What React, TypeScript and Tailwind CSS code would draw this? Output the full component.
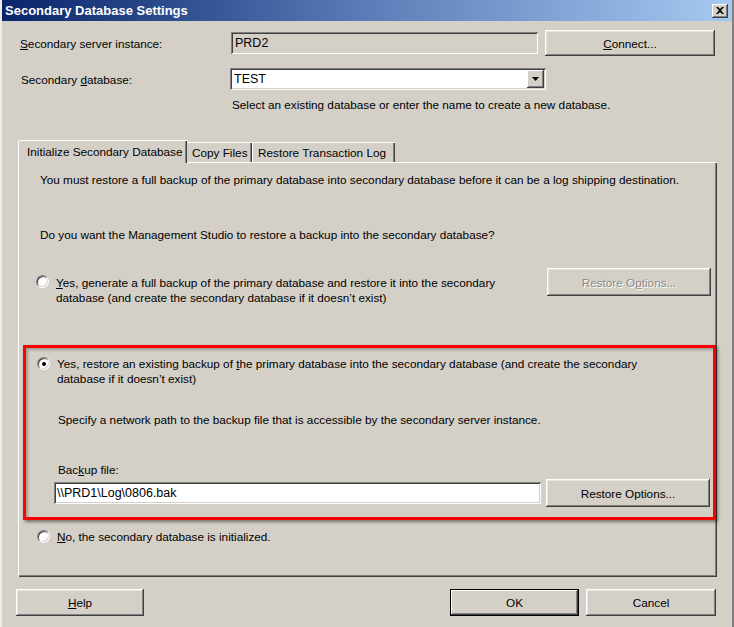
import React from 'react';

// classic 3D button
function Btn({ children, className = '', isDefault = false, disabled = false }: { children: React.ReactNode; className?: string; isDefault?: boolean; disabled?: boolean }) {
  return (
    <div
      className={`flex items-center justify-center bg-[#d4d0c8] ${
        isDefault
          ? 'border border-black shadow-[inset_-1px_-1px_0_#404040,inset_1px_1px_0_#ffffff,inset_-2px_-2px_0_#808080]'
          : 'shadow-[inset_-1px_-1px_0_#404040,inset_1px_1px_0_#ffffff,inset_-2px_-2px_0_#808080,inset_2px_2px_0_#e6e4df]'
      } ${disabled ? 'text-[#8d8b86] [text-shadow:1px_1px_0_#ffffff]' : 'text-black'} ${className}`}
    >
      {children}
    </div>
  );
}

function Radio({ checked = false }: { checked?: boolean }) {
  return (
    <div className="relative w-[13px] h-[13px] shrink-0 rounded-full bg-white border border-t-[#808080] border-l-[#808080] border-b-[#ffffff] border-r-[#ffffff] shadow-[inset_1px_1px_0_#404040,inset_-1px_-1px_0_#d4d0c8]">
      {checked && <div className="absolute left-[3.5px] top-[3.5px] w-[4px] h-[4px] rounded-full bg-black" />}
    </div>
  );
}

const sunken = 'shadow-[inset_1px_1px_0_#808080,inset_-1px_-1px_0_#ffffff,inset_2px_2px_0_#404040,inset_-2px_-2px_0_#d4d0c8]';

export default function App() {
  return (
    <div className="w-[734px] h-[627px] bg-[#d4d0c8] text-black text-[11.75px] leading-[15px] font-['Liberation_Sans',Arial,sans-serif] border-l-2 border-l-[#ecebe6] border-r-2 border-r-[#808080] flex flex-col overflow-hidden">
      {/* title bar */}
      <div className="h-[21px] shrink-0 flex items-center justify-between pl-[3px] pr-[4px] bg-linear-to-r from-[#0a246a] via-[#5a7db8] to-[#a6caf0]">
        <span className="text-white font-bold text-[13px]">Secondary Database Settings</span>
        <div className="w-[16px] h-[14px] flex items-center justify-center bg-[#d4d0c8] shadow-[inset_-1px_-1px_0_#404040,inset_1px_1px_0_#ffffff,inset_-2px_-2px_0_#808080]">
          <svg width="8" height="7" viewBox="0 0 8 7">
            <path d="M0 0h2l2 2 2-2h2L5 3.5 8 7H6L4 5 2 7H0l3-3.5z" fill="#000" />
          </svg>
        </div>
      </div>

      {/* server instance */}
      <div className="mt-[9px] h-[26px] flex items-center">
        <div className="pl-[18px] w-[229px]">
          <span className="underline">S</span>econdary server instance:
        </div>
        <div className={`w-[307px] h-[22px] flex items-center pl-[4px] text-[12.5px] bg-[#d4d0c8] ${sunken}`}>PRD2</div>
        <Btn className="ml-[7px] w-[170px] h-[26px]">
          <span>
            <span className="underline">C</span>onnect...
          </span>
        </Btn>
      </div>

      {/* database */}
      <div className="mt-[12px] h-[22px] flex items-center">
        <div className="pl-[19px] w-[228px]">
          Secondary <span className="underline">d</span>atabase:
        </div>
        <div className={`w-[316px] h-[22px] flex items-center justify-between pl-[4px] pr-[2px] bg-white text-[12.5px] ${sunken}`}>
          <span>TEST</span>
          <div className="w-[17px] h-[18px] flex items-center justify-center bg-[#d4d0c8] shadow-[inset_-1px_-1px_0_#404040,inset_1px_1px_0_#ffffff,inset_-2px_-2px_0_#808080]">
            <svg width="7" height="4" viewBox="0 0 7 4">
              <path d="M0 0h7L3.5 4z" fill="#000" />
            </svg>
          </div>
        </div>
      </div>
      <div className="mt-[7px] pl-[230px]">Select an existing database or enter the name to create a new database.</div>

      {/* tabs */}
      <div className="mt-[28px] ml-[16px] h-[22px] flex items-end">
        <div className="relative z-10 w-[169px] h-[23px] -mb-px bg-[#d4d0c8] border-t border-l border-white rounded-tl-[2px] shadow-[inset_-1px_0_0_#404040,inset_-2px_0_0_#808080] pl-[8px] pt-[3px]">
          Initialize Secondary Database
        </div>
        <div className="w-[65px] h-[20px] bg-[#d4d0c8] border-t border-white shadow-[inset_-1px_0_0_#404040,inset_-2px_0_0_#808080] pl-[5px] pt-[2px]">
          Copy Files
        </div>
        <div className="w-[143px] h-[20px] bg-[#d4d0c8] border-t border-l border-white shadow-[inset_-1px_0_0_#404040,inset_-2px_0_0_#808080] pl-[5px] pt-[2px]">
          Restore Transaction Log
        </div>
      </div>

      {/* tab panel */}
      <div className="ml-[16px] w-[699px] h-[415px] shrink-0 flex flex-col border-t border-l border-white shadow-[inset_-1px_-1px_0_#404040,inset_-2px_-2px_0_#808080]">
        <div className="mt-[9px] ml-[21px]">
          You must restore a full backup of the primary database into secondary database before it can be a log shipping destination.
        </div>
        <div className="mt-[40px] ml-[21px]">Do you want the Management Studio to restore a backup into the secondary database?</div>

        <div className="mt-[26px] flex items-start">
          <div className="ml-[17px] mt-[7px]">
            <Radio />
          </div>
          <div className="ml-[7px] mt-[7px]">
            <span className="underline">Y</span>es, generate a full backup of the primary database and restore it into the secondary
            <br />
            database (and create the secondary database if it doesn’t exist)
          </div>
          <Btn disabled className="ml-auto mr-[6px] w-[164px] h-[28px]">
            <span>
              Restore O<span className="underline">p</span>tions...
            </span>
          </Btn>
        </div>

        {/* highlighted option */}
        <div className="mt-[40px] ml-[4px] w-[693px] h-[175px] border-[3px] border-[#ff0000] shadow-[2px_2px_3px_rgba(0,0,0,0.45),inset_2px_2px_3px_rgba(0,0,0,0.25)] flex flex-col">
          <div className="pt-[8px] flex items-start">
            <div className="ml-[11px] mt-[1px]">
              <Radio checked />
            </div>
            <div className="ml-[7px]">
              Yes, restore an existing backup of <span className="underline">t</span>he primary database into the secondary database (and create the secondary
              <br />
              database if it doesn’t exist)
            </div>
          </div>
          <div className="mt-[26px] ml-[32px]">Specify a network path to the backup file that is accessible by the secondary server instance.</div>
          <div className="mt-[35px] ml-[32px]">
            Bac<span className="underline">k</span>up file:
          </div>
          <div className="mt-[2px] h-[28px] flex items-center">
            <div className={`ml-[28px] w-[487px] h-[22px] flex items-center pl-[3px] bg-white text-[12.5px] ${sunken}`}>\\PRD1\Log\0806.bak</div>
            <Btn className="ml-[5px] w-[164px] h-[28px]">Restore Options...</Btn>
          </div>
        </div>

        <div className="mt-[9px] flex items-center">
          <div className="ml-[18px]">
            <Radio />
          </div>
          <div className="ml-[7px]">
            <span className="underline">N</span>o, the secondary database is initialized.
          </div>
        </div>
      </div>

      {/* bottom buttons */}
      <div className="mt-[12px] h-[27px] flex">
        <Btn className="ml-[14px] w-[128px] h-[27px]">
          <span>
            <span className="underline">H</span>elp
          </span>
        </Btn>
        <Btn isDefault className="ml-auto w-[129px] h-[27px]">
          OK
        </Btn>
        <Btn className="ml-[7px] mr-[16px] w-[130px] h-[27px]">Cancel</Btn>
      </div>
    </div>
  );
}
